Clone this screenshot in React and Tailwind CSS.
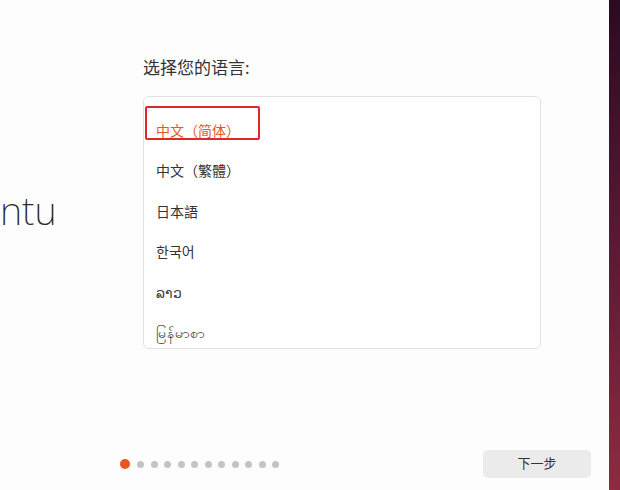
const languages = ['中文（简体）', '中文（繁體）', '日本語', '한국어', 'ລາວ', 'မြန်မာစာ'];

const font = {
  fontFamily: '"Noto Sans", "Noto Sans CJK SC", "Noto Sans CJK KR", "DejaVu Sans", sans-serif',
};

export default function App() {
  const step = 0;

  return (
    <div className="flex h-[490px] w-[620px] overflow-hidden bg-white" style={font}>
      <div className="flex flex-1 flex-col bg-[#fdfdfd]">
        <div className="flex flex-1">
          {/* logo, only the tail of the wordmark is in view */}
          <div className="w-[143px] pt-[191px]">
            <span className="block whitespace-nowrap text-[38px] font-extralight leading-none text-[#2a2a2a]">
              ntu
            </span>
          </div>

          <div className="w-[398px] pt-[55px]">
            <h2 className="text-[17px] leading-[25px] text-[#333]">选择您的语言:</h2>

            <div className="relative mt-[16px] h-[253px] overflow-hidden rounded-[6px] border border-[#e2e2e2] bg-white pt-[13px]">
              {languages.map((lang, i) => (
                <div
                  key={lang}
                  className={`flex h-[40.5px] items-center px-[12px] text-[14px] ${
                    i === step ? 'text-[#e4582a]' : 'text-[#333]'
                  } ${i === 4 ? 'font-light text-[13px] text-[#444]' : ''}`}
                >
                  {lang}
                </div>
              ))}
              {/* annotation */}
              <div className="absolute left-[1px] top-[9px] h-[34px] w-[115px] rounded-[2px] border-2 border-[#e3262b]" />
            </div>
          </div>
        </div>

        <div className="flex h-[50px] items-start pt-[9px]">
          <div className="flex items-center pl-[120px] pt-[10px]">
            <span className="mr-[7px] h-[10px] w-[10px] rounded-full bg-[#e95420]" />
            <div className="flex items-center gap-[6.5px]">
              {Array.from({ length: 11 }).map((_, i) => (
                <span key={i} className="h-[7px] w-[7px] rounded-full bg-[#c4c4c4]" />
              ))}
            </div>
          </div>
          <button className="ml-auto mr-[18px] mt-[1px] flex h-[28px] w-[108px] items-center justify-center rounded-[5px] bg-[#ebebeb] text-[13px] text-[#333]">
            下一步
          </button>
        </div>
      </div>

      <div className="w-[11px] bg-gradient-to-b from-[#2c0a22] via-[#5a1934] to-[#8c2c40]" />
    </div>
  );
}
